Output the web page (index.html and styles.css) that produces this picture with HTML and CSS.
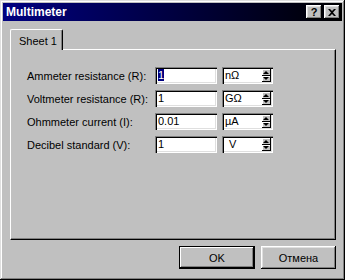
FILE: index.html
```html
<!DOCTYPE html>
<html lang="en">
<head>
    <meta charset="UTF-8">
    <title>Multimeter</title>
    <link rel="stylesheet" href="styles.css">
</head>
<body>
    <div class="window">
        <div class="titlebar">
            <span class="title">Multimeter</span>
            <div class="title-buttons">
                <div class="tbtn help">?</div>
                <div class="tbtn close">
                    <svg width="8" height="7" viewBox="0 0 8 7"><path d="M0 0h2l2 2 2-2h2L5 3.5 8 7H6L4 5 2 7H0l3-3.5z" fill="#000"/></svg>
                </div>
            </div>
        </div>

        <div class="tabs">
            <div class="tab">Sheet 1</div>
        </div>
        <div class="panel">
            <div class="form">
                <div class="row">
                    <label>Ammeter resistance (R):</label>
                    <div class="field"><span class="sel">1</span></div>
                    <div class="combo"><span class="unit">nΩ</span><div class="spin"><div class="arr up"></div><div class="arr down"></div></div></div>
                </div>
                <div class="row">
                    <label>Voltmeter resistance (R):</label>
                    <div class="field">1</div>
                    <div class="combo"><span class="unit">GΩ</span><div class="spin"><div class="arr up"></div><div class="arr down"></div></div></div>
                </div>
                <div class="row">
                    <label>Ohmmeter current (I):</label>
                    <div class="field">0.01</div>
                    <div class="combo"><span class="unit">µA</span><div class="spin"><div class="arr up"></div><div class="arr down"></div></div></div>
                </div>
                <div class="row">
                    <label>Decibel standard (V):</label>
                    <div class="field">1</div>
                    <div class="combo"><span class="unit center">V</span><div class="spin"><div class="arr up"></div><div class="arr down"></div></div></div>
                </div>
            </div>
        </div>

        <div class="buttons">
            <div class="btn default">OK</div>
            <div class="btn">Отмена</div>
        </div>
    </div>
</body>
</html>
```

FILE: styles.css
```css
body {
    margin: 0;
    padding: 0;
    background: #c0c0c0;
    font-family: "Liberation Sans", Arial, sans-serif;
    font-size: 11px;
    color: #000;
}

/* window frame */
.window {
    width: 345px;
    height: 280px;
    box-sizing: border-box;
    padding: 3px;
    background: #c0c0c0;
    box-shadow: inset -1px -1px #000, inset 1px 1px #dfdfdf, inset -2px -2px #808080, inset 2px 2px #fff;
}

.titlebar {
    height: 18px;
    display: flex;
    align-items: center;
    justify-content: space-between;
    padding: 0 2px 0 3px;
    background: linear-gradient(to right, #000080, #000000);
}

.title {
    color: #fff;
    font-weight: bold;
    font-size: 12px;
}

.title-buttons {
    display: flex;
    gap: 2px;
}

.tbtn {
    width: 16px;
    height: 14px;
    box-sizing: border-box;
    background: #c0c0c0;
    display: flex;
    align-items: center;
    justify-content: center;
    font-weight: bold;
    font-size: 11px;
    box-shadow: inset -1px -1px #000, inset 1px 1px #fff, inset -2px -2px #808080, inset 2px 2px #dfdfdf;
}

/* tab */
.tabs {
    display: flex;
    padding: 8px 0 0 7px;
}

.tab {
    width: 53px;
    height: 21px;
    box-sizing: border-box;
    padding: 5px 0 0 8px;
    white-space: nowrap;
    border-top: 1px solid #fff;
    border-left: 1px solid #fff;
    border-right: 1px solid #000;
    border-top-left-radius: 2px;
    border-top-right-radius: 2px;
    box-shadow: inset -1px 0 #808080;
    position: relative;
    z-index: 1;
    margin-bottom: -1px;
    background: #c0c0c0;
}

.panel {
    margin-left: 7px;
    width: 326px;
    height: 191px;
    box-sizing: border-box;
    border-top: 1px solid #fff;
    border-left: 1px solid #fff;
    border-right: 1px solid #000;
    border-bottom: 1px solid #000;
    box-shadow: inset -1px -1px #808080;
}

.form {
    padding: 17px 0 0 16px;
    display: flex;
    flex-direction: column;
    gap: 6px;
}

.row {
    display: flex;
    align-items: center;
    height: 17px;
}

.row label {
    width: 128px;
    white-space: nowrap;
}

.field {
    width: 62px;
    height: 17px;
    box-sizing: border-box;
    background: #fff;
    padding: 2px 3px;
    line-height: 13px;
    box-shadow: inset 1px 1px #808080, inset 2px 2px #000, inset -1px -1px #fff, inset -2px -2px #dfdfdf;
}

.sel {
    background: #000080;
    color: #fff;
}

.combo {
    margin-left: 5px;
    width: 51px;
    height: 17px;
    box-sizing: border-box;
    background: #fff;
    padding: 2px;
    display: flex;
    box-shadow: inset 1px 1px #808080, inset 2px 2px #000, inset -1px -1px #fff, inset -2px -2px #dfdfdf;
}

.unit {
    flex: 1;
    padding-left: 1px;
    line-height: 13px;
}

.unit.center {
    padding-left: 5px;
}

.spin {
    width: 9px;
    display: flex;
    flex-direction: column;
}

.arr {
    flex: 1;
    background: #c0c0c0;
    position: relative;
    box-shadow: inset -1px -1px #000, inset 1px 1px #fff;
}

.arr::after {
    content: "";
    position: absolute;
    left: 1px;
    top: 2px;
    border-left: 3px solid transparent;
    border-right: 3px solid transparent;
}

.arr.up::after {
    border-bottom: 3px solid #000;
}

.arr.down::after {
    top: 1px;
    border-top: 3px solid #000;
}

/* bottom buttons */
.buttons {
    display: flex;
    justify-content: flex-end;
    gap: 6px;
    padding: 6px 6px 0 0;
}

.btn {
    width: 75px;
    height: 23px;
    box-sizing: border-box;
    display: flex;
    align-items: center;
    justify-content: center;
    box-shadow: inset -1px -1px #000, inset 1px 1px #fff, inset -2px -2px #808080, inset 2px 2px #dfdfdf;
}

.btn.default {
    width: 76px;
    border: 1px solid #000;
    box-shadow: inset -1px -1px #000, inset 1px 1px #fff, inset -2px -2px #808080;
}
```
